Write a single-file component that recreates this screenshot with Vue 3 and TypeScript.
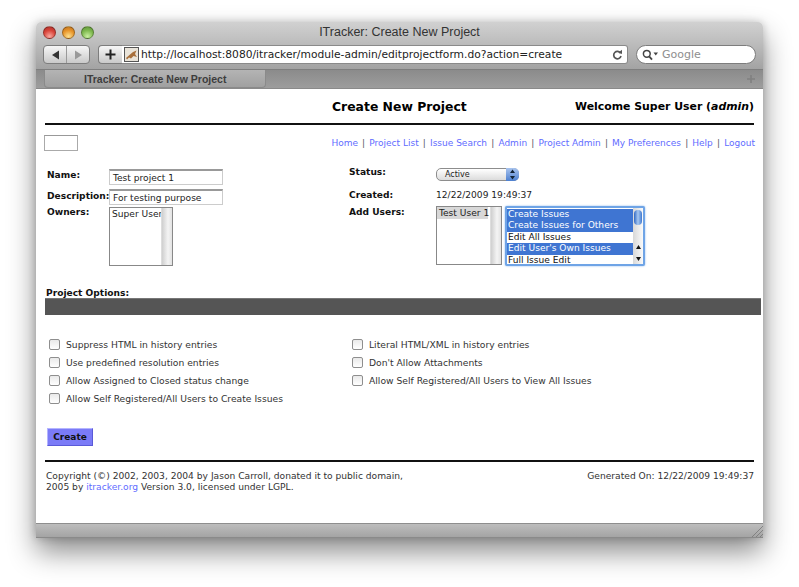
<script setup lang="ts">
interface OptionItem {
  label: string
}

const navLinks = ['Home', 'Project List', 'Issue Search', 'Admin', 'Project Admin', 'My Preferences', 'Help', 'Logout']

const leftOptions: OptionItem[] = [
  { label: 'Suppress HTML in history entries' },
  { label: 'Use predefined resolution entries' },
  { label: 'Allow Assigned to Closed status change' },
  { label: 'Allow Self Registered/All Users to Create Issues' }
]

const rightOptions: OptionItem[] = [
  { label: 'Literal HTML/XML in history entries' },
  { label: "Don't Allow Attachments" },
  { label: 'Allow Self Registered/All Users to View All Issues' }
]

const permissions = [
  { label: 'Create Issues', selected: true },
  { label: 'Create Issues for Others', selected: true },
  { label: 'Edit All Issues', selected: false },
  { label: "Edit User's Own Issues", selected: true },
  { label: 'Full Issue Edit', selected: false }
]
</script>

<template>
  <div class="desktop">
    <div class="window">
      <!-- title bar -->
      <div class="chrome">
        <div class="titlebar">
          <div class="lights">
            <span class="light red"></span>
            <span class="light orange"></span>
            <span class="light green"></span>
          </div>
          <div class="title">ITracker: Create New Project</div>
        </div>

        <div class="toolbar">
          <div class="nav-btns">
            <span class="nav-btn">
              <svg width="9" height="10" viewBox="0 0 9 10"><path d="M8 0.5V9.5L1 5Z" fill="#333" /></svg>
            </span>
            <span class="nav-btn">
              <svg width="9" height="10" viewBox="0 0 9 10"><path d="M1 0.5V9.5L8 5Z" fill="#999" /></svg>
            </span>
          </div>
          <span class="plus-btn">
            <svg width="11" height="11" viewBox="0 0 11 11"><path d="M5.5 0.5V10.5M0.5 5.5H10.5" stroke="#222" stroke-width="2" /></svg>
          </span>
          <div class="url-bar">
            <svg class="favicon" width="15" height="15" viewBox="0 0 15 15">
              <rect x="0.5" y="0.5" width="14" height="14" fill="#e9e4da" stroke="#555" />
              <path d="M2 11L6 7.5L9 5L12.5 3.5L11 7L13 10L9.5 9L7 11.5L5 10.5L3 12.5Z" fill="#a8703c" />
            </svg>
            <span class="url">http://localhost:8080/itracker/module-admin/editprojectform.do?action=create</span>
            <svg class="reload" width="11" height="12" viewBox="0 0 11 12">
              <path d="M8.6 4.2A3.7 3.7 0 1 0 9 7" fill="none" stroke="#555" stroke-width="1.7" />
              <path d="M6.4 3.6L10 0.8V5Z" fill="#555" />
            </svg>
          </div>
          <div class="search-bar">
            <svg width="17" height="12" viewBox="0 0 17 12">
              <circle cx="4.8" cy="4.8" r="3.4" fill="none" stroke="#444" stroke-width="1.5" />
              <path d="M7.2 7.4L10 10.6" stroke="#444" stroke-width="1.8" />
              <path d="M11.5 3.5H16L13.75 6.5Z" fill="#444" />
            </svg>
            <span class="search-text">Google</span>
          </div>
        </div>

        <div class="tabbar">
          <div class="tab">ITracker: Create New Project</div>
          <div class="tab-rest"></div>
          <svg class="tab-plus" width="8" height="8" viewBox="0 0 8 8"><path d="M4 0V8M0 4H8" stroke="#808080" stroke-width="1.6" /></svg>
        </div>
      </div>

      <!-- page -->
      <div class="page">
        <div class="page-head">
          <div class="head-spacer"></div>
          <h1 class="page-title">Create New Project</h1>
          <div class="welcome">Welcome Super User (<em>admin</em>)</div>
        </div>
        <div class="rule"></div>

        <div class="nav-row">
          <span class="small-box"></span>
          <div class="links">
            <template v-for="(link, i) in navLinks" :key="link">
              <span v-if="i > 0" class="sep">|</span>
              <a class="link">{{ link }}</a>
            </template>
          </div>
        </div>

        <div class="form-cols">
          <div class="form-left">
            <div class="field name-field">
              <span class="label">Name:</span>
              <span class="text-input">Test project 1</span>
            </div>
            <div class="field desc-field">
              <span class="label">Description:</span>
              <span class="text-input">For testing purpose</span>
            </div>
            <div class="field">
              <span class="label">Owners:</span>
              <div class="listbox owners">
                <div class="list-items"><div class="list-item">Super User</div></div>
                <div class="list-track"></div>
              </div>
            </div>
          </div>

          <div class="form-right">
            <div class="rfield status-field">
              <span class="label">Status:</span>
              <span class="select">
                <span>Active</span>
                <span class="select-arrows">
                  <svg width="7" height="11" viewBox="0 0 7 11"><path d="M3.5 0.5L6 4H1ZM3.5 10.5L1 7H6Z" fill="#123" /></svg>
                </span>
              </span>
            </div>
            <div class="rfield created-field">
              <span class="label">Created:</span>
              <span class="value">12/22/2009 19:49:37</span>
            </div>
            <div class="rfield users-field">
              <span class="label">Add Users:</span>
              <div class="list-pair">
                <div class="listbox users">
                  <div class="list-items"><div class="list-item grey">Test User 1</div></div>
                  <div class="list-track"></div>
                </div>
                <div class="perm-box">
                  <div class="perm-items">
                    <div
                      v-for="perm in permissions"
                      :key="perm.label"
                      :class="['perm-item', { selected: perm.selected }]"
                    >
                      {{ perm.label }}
                    </div>
                  </div>
                  <div class="perm-scroll">
                    <span class="perm-thumb"></span>
                    <svg width="9" height="22" viewBox="0 0 9 22">
                      <path d="M4.5 3L7 7H2ZM4.5 19L2 15H7Z" fill="#111" />
                    </svg>
                  </div>
                </div>
              </div>
            </div>
          </div>
        </div>

        <div class="options-title">Project Options:</div>
        <div class="options-bar"></div>

        <div class="options">
          <div class="option-col">
            <label v-for="opt in leftOptions" :key="opt.label" class="option">
              <span class="check"></span>{{ opt.label }}
            </label>
          </div>
          <div class="option-col">
            <label v-for="opt in rightOptions" :key="opt.label" class="option">
              <span class="check"></span>{{ opt.label }}
            </label>
          </div>
        </div>

        <button class="create-btn">Create</button>

        <div class="rule foot-rule"></div>
        <div class="footer">
          <div>
            Copyright (©) 2002, 2003, 2004 by Jason Carroll, donated it to public domain,<br />
            2005 by <a class="link">itracker.org</a> Version 3.0, licensed under LGPL.
          </div>
          <div class="generated">Generated On: 12/22/2009 19:49:37</div>
        </div>
      </div>

      <div class="statusbar">
        <svg class="grip" width="11" height="11" viewBox="0 0 11 11">
          <path d="M0 11L11 0M4 11L11 4M8 11L11 8" stroke="#777" stroke-width="0.8" />
        </svg>
      </div>
    </div>
  </div>
</template>

<style scoped>
.desktop {
  width: 799px;
  height: 587px;
  padding: 22px 36px 0 36px;
  box-sizing: border-box;
  overflow: hidden;
  background: #fff;
  font-family: 'DejaVu Sans', Verdana, sans-serif;
  font-size: 9.1px;
  color: #222;
}

.window {
  width: 727px;
  height: 516px;
  display: flex;
  flex-direction: column;
  border-radius: 5px 5px 0 0;
  box-shadow: 0 14px 28px rgba(0, 0, 0, 0.45), 0 0 8px rgba(0, 0, 0, 0.2);
}

.chrome {
  border-radius: 5px 5px 0 0;
  background: linear-gradient(#d1d1d1, #a2a2a2 48px);
}

.titlebar {
  height: 21px;
  position: relative;
}

.lights {
  position: absolute;
  left: 7px;
  top: 4px;
  display: flex;
  gap: 6px;
}

.light {
  width: 13px;
  height: 13px;
  border-radius: 50%;
  box-sizing: border-box;
  border: 1px solid rgba(0, 0, 0, 0.3);
}

.red {
  background: radial-gradient(circle at 50% 85%, #f9a9a0, #d9443a 55%, #a8302a);
}

.orange {
  background: radial-gradient(circle at 50% 85%, #fde08f, #e8952a 55%, #b96f20);
}

.green {
  background: radial-gradient(circle at 50% 85%, #c9efa0, #7fb94f 55%, #5d9138);
}

.title {
  text-align: center;
  padding-top: 3px;
  font-family: 'Liberation Sans', Arial, sans-serif;
  font-size: 12.5px;
  line-height: 15px;
  color: #333;
}

.toolbar {
  height: 27px;
  display: flex;
  align-items: flex-start;
  padding: 2px 7px 0 7px;
  box-sizing: border-box;
  border-bottom: 1px solid #7f7f7f;
}

.nav-btns {
  display: flex;
  width: 47px;
  height: 19px;
  border: 1px solid #7d7d7d;
  border-radius: 4px;
  box-sizing: border-box;
  background: linear-gradient(#f6f6f6, #c9c9c9);
}

.nav-btn {
  flex: 1;
  display: flex;
  align-items: center;
  justify-content: center;
}

.nav-btn + .nav-btn {
  border-left: 1px solid #999;
}

.plus-btn {
  margin-left: 8px;
  width: 24px;
  height: 19px;
  box-sizing: border-box;
  border: 1px solid #7d7d7d;
  border-right: none;
  border-radius: 4px 0 0 4px;
  background: linear-gradient(#f6f6f6, #c9c9c9);
  display: flex;
  align-items: center;
  justify-content: center;
}

.url-bar {
  width: 506px;
  height: 19px;
  box-sizing: border-box;
  background: #fff;
  border: 1px solid #8a8a8a;
  border-left: none;
  border-radius: 0 3px 3px 0;
  display: flex;
  align-items: center;
  padding: 0 4px 0 2px;
}

.favicon {
  flex: none;
}

.url {
  flex: 1;
  margin-left: 2px;
  font-size: 10.7px;
  color: #222;
  white-space: nowrap;
}

.reload {
  flex: none;
}

.search-bar {
  margin-left: 8px;
  flex: 1;
  height: 19px;
  box-sizing: border-box;
  border: 1px solid #7d7d7d;
  border-radius: 10px;
  background: #fff;
  display: flex;
  align-items: center;
  padding-left: 5px;
}

.search-text {
  margin-left: 3px;
  font-size: 11px;
  color: #8e8e8e;
}

.tabbar {
  height: 19px;
  display: flex;
  position: relative;
  background: linear-gradient(#8b8b8b, #9d9d9d);
  border-bottom: 1px solid #8a8a8a;
  box-sizing: border-box;
}

.tab {
  width: 222px;
  margin-left: 8px;
  height: 18px;
  box-sizing: border-box;
  padding: 2px 0 0 39px;
  background: linear-gradient(#b4b4b4, #a0a0a0);
  border: 1px solid #8a8a8a;
  border-top: none;
  border-radius: 0 0 4px 4px;
  font-weight: bold;
  font-family: 'Liberation Sans', Arial, sans-serif;
  font-size: 10.5px;
  line-height: 14px;
  color: #3d3d3d;
}

.tab-rest {
  flex: 1;
}

.tab-plus {
  position: absolute;
  right: 8px;
  top: 5px;
}

.page {
  flex: 1;
  background: #fff;
  padding: 0 9px;
  display: flex;
  flex-direction: column;
}

.page-head {
  height: 34px;
  display: flex;
  align-items: center;
}

.head-spacer {
  width: 287px;
  flex: none;
}

.page-title {
  margin: 0;
  font-size: 12.4px;
  font-weight: bold;
  color: #000;
  white-space: nowrap;
  width: 190px;
  flex: none;
}

.welcome {
  flex: 1;
  text-align: right;
  font-size: 10.9px;
  font-weight: bold;
  color: #000;
  white-space: nowrap;
}

.rule {
  height: 2px;
  background: #111;
}

.nav-row {
  height: 27px;
  display: flex;
  justify-content: space-between;
  align-items: flex-start;
  margin: 0 -1px;
  padding-top: 10px;
  box-sizing: border-box;
}

.small-box {
  width: 34px;
  height: 16px;
  box-sizing: border-box;
  border: 1px solid #aaa;
  border-top-color: #999;
  background: #fff;
}

.links {
  margin-top: 2px;
  font-size: 9px;
  white-space: nowrap;
  line-height: 12px;
}

.sep {
  margin: 0 4.15px;
  color: #556;
}

.link {
  color: #5f6cff;
}

.form-cols {
  display: flex;
  height: 136px;
  box-sizing: border-box;
  padding: 12px 0 0 1px;
}

.form-left {
  width: 303px;
  flex: none;
}

.form-right {
  flex: 1;
}

.label {
  font-weight: bold;
  color: #111;
  white-space: nowrap;
}

.field {
  display: grid;
  grid-template-columns: 62px auto;
  padding-left: 1px;
  justify-content: start;
  align-items: start;
}

.name-field {
  height: 20px;
  padding-top: 5px;
}

.name-field .label {
  padding-top: 1px;
}

.desc-field {
  height: 18px;
}

.desc-field .label {
  padding-top: 2px;
}

.text-input {
  width: 114px;
  height: 16px;
  box-sizing: border-box;
  display: block;
  border: 1px solid #ccc;
  border-top: 2px solid #999;
  padding-left: 3px;
  line-height: 14px;
  color: #222;
  white-space: nowrap;
}

.listbox {
  display: flex;
  height: 59px;
  box-sizing: border-box;
  border: 1px solid #888;
  background: #fff;
}

.owners {
  width: 64px;
}

.users {
  width: 66px;
}

.list-items {
  flex: 1;
  line-height: 12px;
  white-space: nowrap;
  overflow: hidden;
}

.list-item {
  padding-left: 2px;
}

.list-item.grey {
  background: #d8d8d8;
  margin-right: 2px;
}

.list-track {
  width: 10px;
  flex: none;
  background: linear-gradient(90deg, #cfcfcf, #f4f4f4 60%, #e2e2e2);
  border-left: 1px solid #ddd;
}

.rfield {
  display: grid;
  grid-template-columns: 87px auto;
  justify-content: start;
  align-items: start;
}

.status-field {
  height: 26px;
  padding-top: 3px;
  box-sizing: border-box;
}

.created-field {
  height: 16px;
}

.users-field .label {
  padding-top: 1px;
}

.select {
  width: 83px;
  height: 13px;
  box-sizing: border-box;
  border: 1px solid #8d8d8d;
  border-radius: 5px;
  background: linear-gradient(#fff, #dcdcdc);
  font-size: 8px;
  line-height: 11px;
  padding-left: 8px;
  position: relative;
  display: block;
  margin-top: 1px;
}

.select-arrows {
  position: absolute;
  right: -1px;
  top: -1px;
  width: 13px;
  height: 13px;
  border-radius: 0 5px 5px 0;
  background: linear-gradient(#a9c4ee, #4d80d0);
  display: flex;
  align-items: center;
  justify-content: center;
}

.list-pair {
  display: flex;
}

.perm-box {
  margin-left: 3px;
  width: 140px;
  height: 60px;
  box-sizing: border-box;
  border: 2px solid #6fa4e6;
  border-radius: 2px;
  box-shadow: 0 0 2px #7fb0ea;
  display: flex;
  background: #fff;
}

.perm-items {
  flex: 1;
  padding-top: 0.6px;
}

.perm-item {
  height: 11.6px;
  line-height: 11.6px;
  padding-left: 1px;
  color: #111;
  white-space: nowrap;
}

.perm-item.selected {
  background: #3f75d2;
  color: #fff;
}

.perm-scroll {
  width: 10px;
  flex: none;
  background: linear-gradient(90deg, #d8d8d8, #fafafa);
  display: flex;
  flex-direction: column;
  align-items: center;
  justify-content: flex-end;
  position: relative;
}

.perm-thumb {
  position: absolute;
  top: 2px;
  left: 1px;
  width: 8px;
  height: 15px;
  border-radius: 4px;
  background: linear-gradient(90deg, #2f68c4, #a8c8f0 50%, #3f78d0);
}

.options-title {
  font-weight: bold;
  color: #111;
  line-height: 10px;
  margin-left: 1px;
}

.options-bar {
  height: 17px;
  margin-right: -7px;
  background: #555;
  border-top: 1px solid #777;
  box-sizing: border-box;
}

.options {
  display: flex;
  padding: 20px 0 0 4px;
}

.option-col {
  display: flex;
  flex-direction: column;
  width: 303px;
  flex: none;
}

.option {
  display: flex;
  align-items: center;
  height: 18px;
  font-size: 9.2px;
  white-space: nowrap;
  color: #333;
}

.check {
  width: 11px;
  height: 11px;
  margin-right: 6px;
  box-sizing: border-box;
  border: 1px solid #8e8e8e;
  border-radius: 2px;
  background: linear-gradient(#e9e9e9, #fff);
  flex: none;
}

.create-btn {
  align-self: flex-start;
  margin: 21px 0 0 2px;
  width: 46px;
  height: 18px;
  padding: 0;
  box-sizing: border-box;
  border: 1px solid #7f7fe0;
  border-top-color: #b4b4ff;
  border-left-color: #b4b4ff;
  border-bottom-color: #5a5ad8;
  border-right-color: #5a5ad8;
  background: #7b7bf7;
  font-family: inherit;
  font-size: 9px;
  font-weight: bold;
  color: #111;
}

.foot-rule {
  margin-top: 14px;
}

.footer {
  display: flex;
  justify-content: space-between;
  padding: 9px 0 0 1px;
  line-height: 11px;
  font-size: 9.15px;
  color: #333;
}

.generated {
  white-space: nowrap;
}

.statusbar {
  height: 15px;
  flex: none;
  position: relative;
  box-sizing: border-box;
  border-top: 1px solid #8e8e8e;
  border-bottom: 1px solid #8a8a8a;
  background: linear-gradient(#bdbdbd, #a4a4a4);
}

.grip {
  position: absolute;
  right: 0;
  bottom: 0;
}
</style>
